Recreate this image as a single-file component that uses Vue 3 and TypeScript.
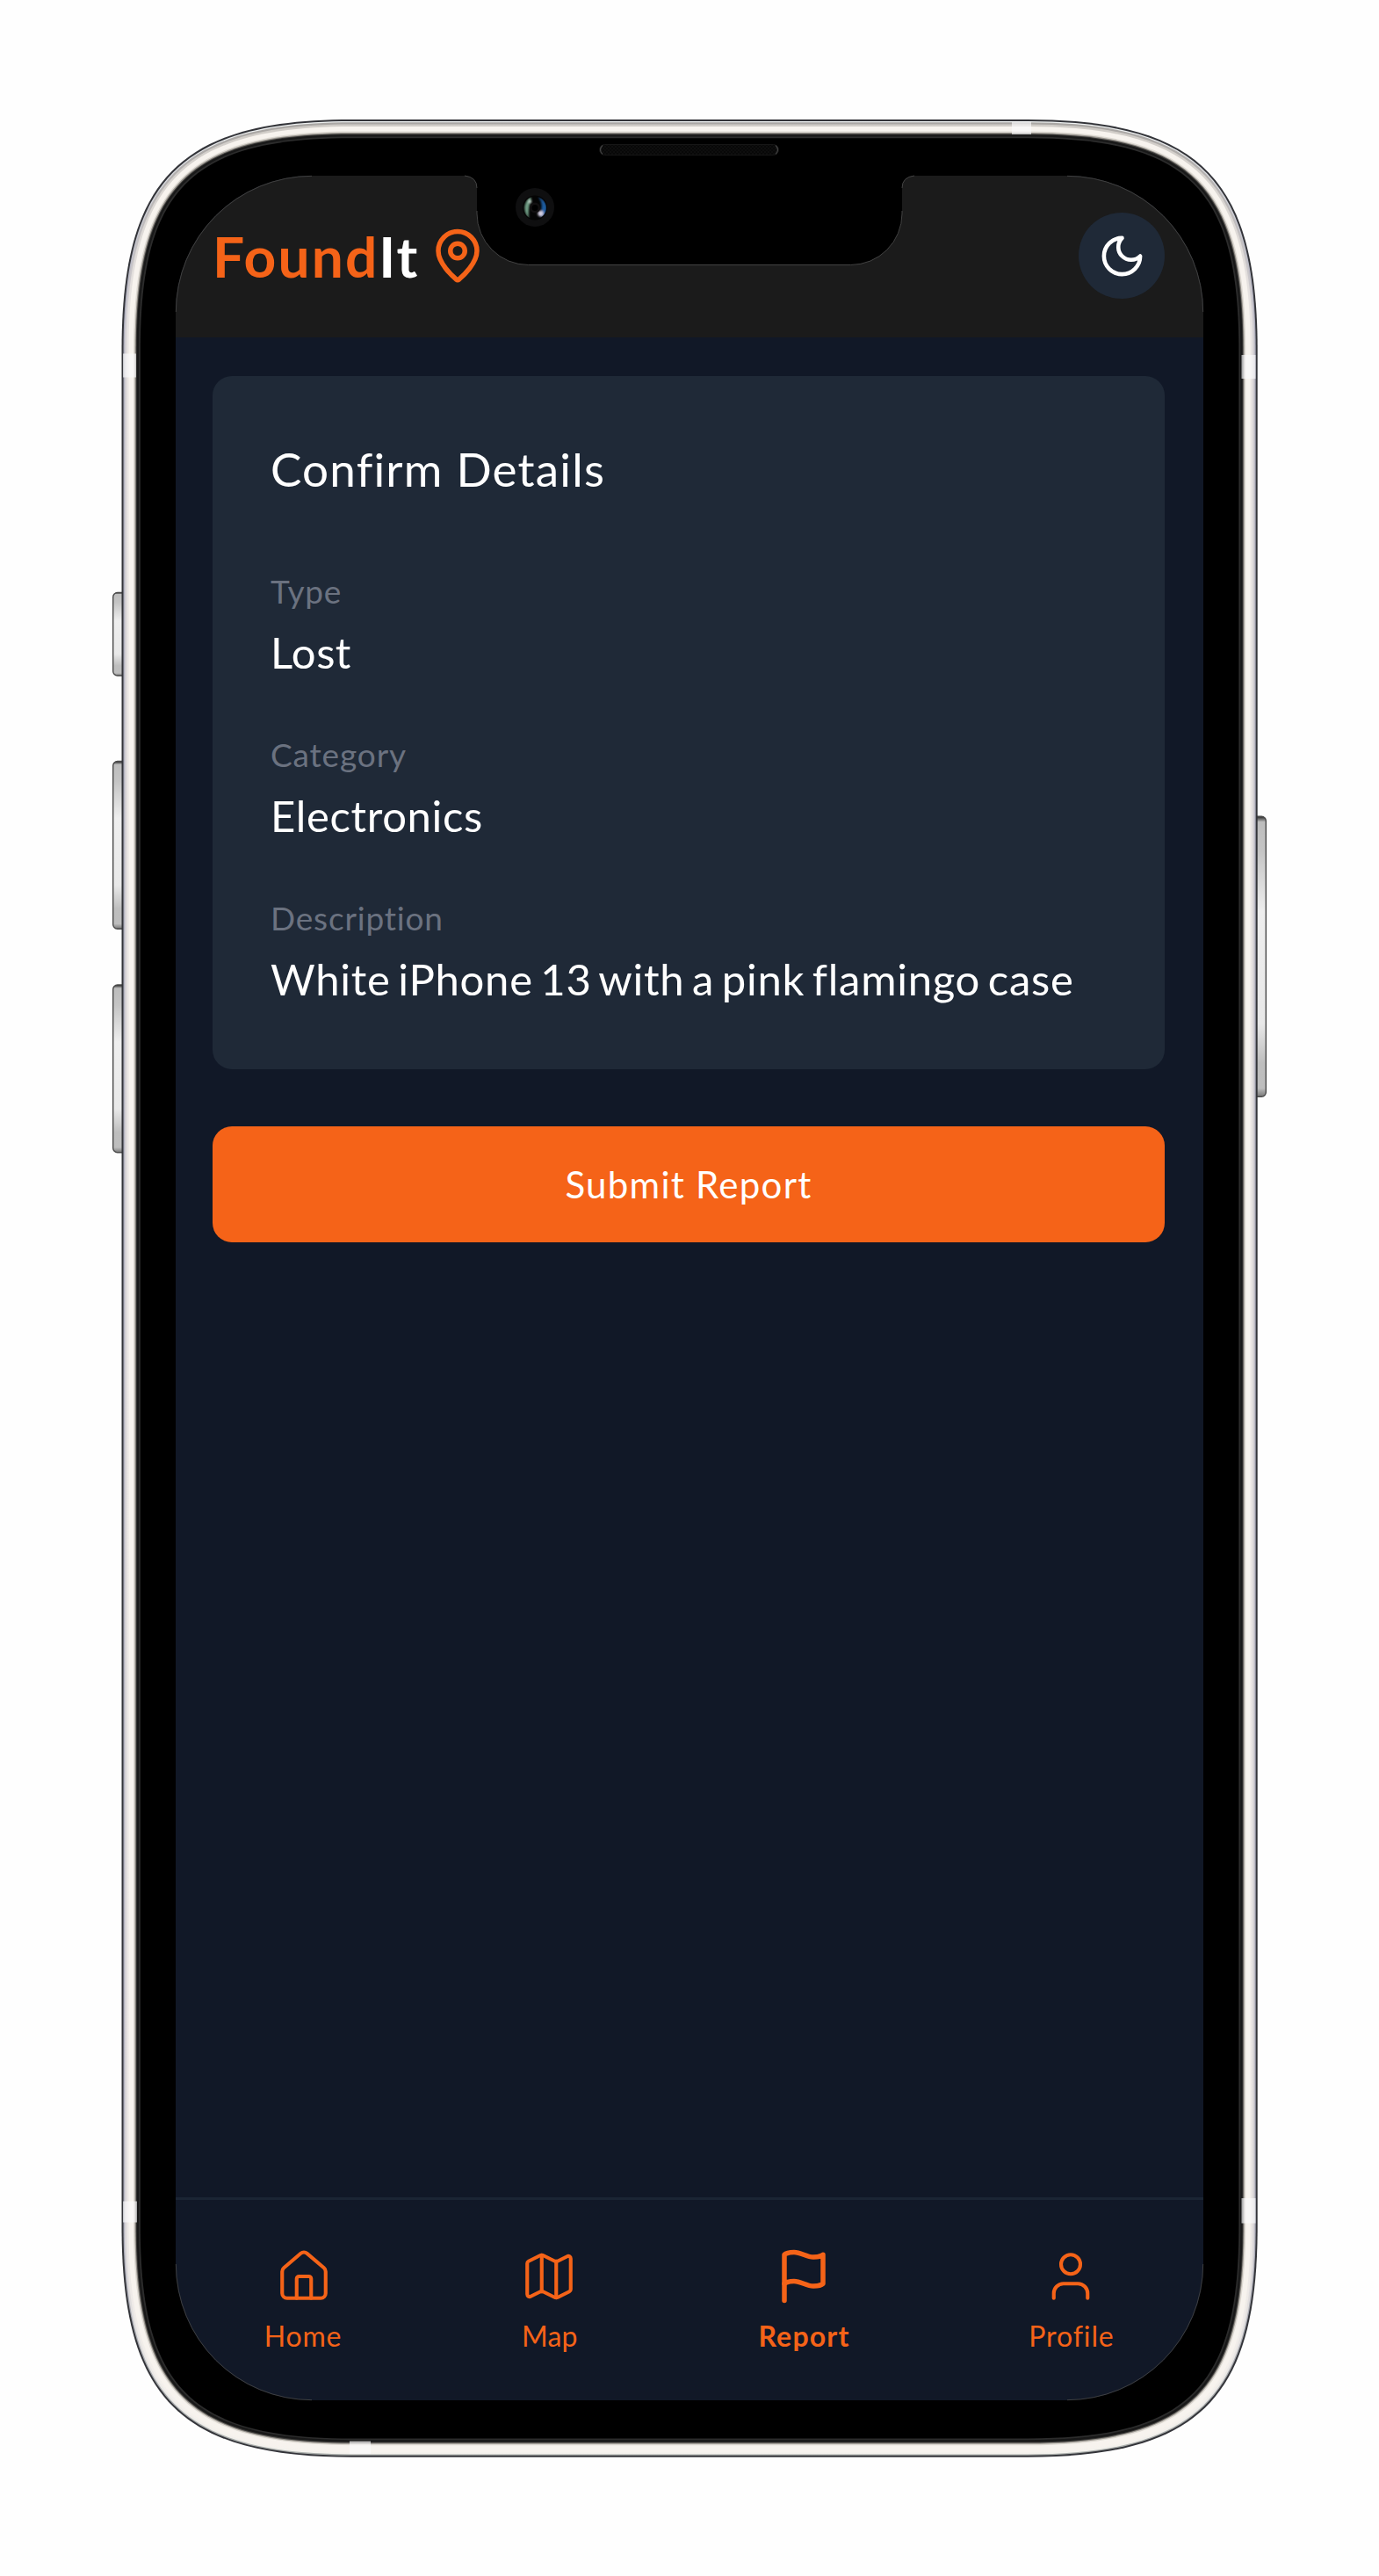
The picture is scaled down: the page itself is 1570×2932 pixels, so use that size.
<script setup lang="ts">
interface Detail {
  label: string
  value: string
  labelSpacing: string
  valueSpacing: string
  wordSpacing?: string
}

interface Tab {
  name: string
  spacing: string
  nudge: string
  active?: boolean
  stroke: number
  paths: string[]
}

interface Ring {
  inset: number
  fill: string
}

const details: Detail[] = [
  { label: 'Type', value: 'Lost', labelSpacing: '0.8px', valueSpacing: '0.5px' },
  { label: 'Category', value: 'Electronics', labelSpacing: '0.86px', valueSpacing: '0.64px' },
  {
    label: 'Description',
    value: 'White iPhone 13 with a pink flamingo case',
    labelSpacing: '0.83px',
    valueSpacing: '0.75px',
    wordSpacing: '-4.700px',
  },
]

const tabs: Tab[] = [
  {
    name: 'Home',
    spacing: '0.77px',
    nudge: '-2px',
    stroke: 1.5,
    paths: [
      'M15 21v-8a1 1 0 0 0-1-1h-4a1 1 0 0 0-1 1v8',
      'M3 10a2 2 0 0 1 .709-1.528l7-5.999a2 2 0 0 1 2.582 0l7 5.999A2 2 0 0 1 21 10v9a2 2 0 0 1-2 2H5a2 2 0 0 1-2-2z',
    ],
  },
  {
    name: 'Map',
    spacing: '0.1px',
    nudge: '1px',
    stroke: 1.5,
    paths: [
      'M14.106 5.553a2 2 0 0 0 1.788 0l3.659-1.83A1 1 0 0 1 21 4.619v12.764a1 1 0 0 1-.553.894l-4.553 2.277a2 2 0 0 1-1.788 0l-4.212-2.106a2 2 0 0 0-1.788 0l-3.659 1.83A1 1 0 0 1 3 19.381V6.618a1 1 0 0 1 .553-.894l4.553-2.277a2 2 0 0 1 1.788 0z',
      'M15 5.764v15',
      'M9 3.236v15',
    ],
  },
  {
    name: 'Report',
    spacing: '1.2px',
    nudge: '0px',
    active: true,
    stroke: 2,
    paths: ['M4 15s1-1 4-1 5 2 8 2 4-1 4-1V3s-1 1-4 1-5-2-8-2-4 1-4 1z', 'M4 22v-7'],
  },
  {
    name: 'Profile',
    spacing: '0.9px',
    nudge: '1px',
    stroke: 1.5,
    paths: ['M19 21v-2a4 4 0 0 0-4-4H9a4 4 0 0 0-4 4v2', 'M16 7a4 4 0 1 1-8 0a4 4 0 0 1 8 0z'],
  },
]

// Body outline with continuous-curvature corners, inset evenly by d.
function body(d: number): string {
  const l = 138.5 + d
  const t = 136 + d
  const r = 1431.7 - d
  const b = 2796.7 - d
  const L = 262 - d
  const k = (8 * (58 - 0.293 * d) - L) / 3
  return (
    `M${l} ${t + L}C${l} ${t + k} ${l + k} ${t} ${l + L} ${t}H${r - L}` +
    `C${r - k} ${t} ${r} ${t + k} ${r} ${t + L}V${b - L}` +
    `C${r} ${b - k} ${r - k} ${b} ${r - L} ${b}H${l + L}` +
    `C${l + k} ${b} ${l} ${b - k} ${l} ${b - L}Z`
  )
}

const rings: Ring[] = [
  { inset: 0, fill: '#333439' },
  { inset: 2, fill: 'url(#edge1)' },
  { inset: 3.3, fill: 'url(#edge2)' },
  { inset: 5.5, fill: 'url(#edge3)' },
  { inset: 8, fill: '#f7f3ee' },
  { inset: 13.5, fill: '#dedad3' },
  { inset: 15, fill: '#98948e' },
  { inset: 16.2, fill: '#3c3b39' },
  { inset: 17.2, fill: '#181818' },
  { inset: 19.5, fill: '#2c2c2c' },
  { inset: 21.3, fill: '#000' },
]
</script>

<template>
  <main class="stage">
    <svg class="frame" viewBox="0 0 1570 2932" width="1570" height="2932" aria-hidden="true">
      <defs>
        <linearGradient id="edge1" x1="0" y1="0" x2="0" y2="1">
          <stop offset="0" stop-color="#f0f3f3" /><stop offset="0.08" stop-color="#a9a9b8" /><stop offset="0.9" stop-color="#a9a9b8" /><stop offset="1" stop-color="#a9adaa" />
        </linearGradient>
        <linearGradient id="edge2" x1="0" y1="0" x2="0" y2="1">
          <stop offset="0" stop-color="#a9a6a3" /><stop offset="0.08" stop-color="#d2cfd3" /><stop offset="0.9" stop-color="#d6d3d6" /><stop offset="1" stop-color="#f4f2ed" />
        </linearGradient>
        <linearGradient id="edge3" x1="0" y1="0" x2="0" y2="1">
          <stop offset="0" stop-color="#d0ccc7" /><stop offset="0.08" stop-color="#e8e4e2" /><stop offset="0.9" stop-color="#eae6e4" /><stop offset="1" stop-color="#f7f3ee" />
        </linearGradient>
        <linearGradient id="key" x1="0" y1="0" x2="0" y2="1">
          <stop offset="0" stop-color="#222" /><stop offset="0.02" stop-color="#bdbdbd" /><stop offset="0.12" stop-color="#c4c4c4" /><stop offset="0.34" stop-color="#eeeeee" /><stop offset="0.74" stop-color="#e8e8e8" /><stop offset="0.88" stop-color="#bebebe" /><stop offset="0.97" stop-color="#bdbdbd" /><stop offset="1" stop-color="#777" />
        </linearGradient>
      </defs>
      <g fill="url(#key)" stroke="#4a4a4a" stroke-width="1.4">
        <rect x="128.7" y="674.5" width="20" height="94.500" rx="5" />
        <rect x="128.7" y="866.5" width="20" height="190.700" rx="5" />
        <rect x="128.7" y="1121" width="20" height="190.700" rx="5" />
        <rect x="1421" y="929.2" width="20.300" height="319" rx="5" />
      </g>
      <path v-for="ring in rings" :key="ring.inset" :d="body(ring.inset)" :fill="ring.fill" />
      <g fill="#fafafc" fill-opacity="0.65">
        <rect x="1152" y="138.500" width="22" height="14.500" />
        <rect x="398" y="2778.500" width="24" height="14.500" />
        <rect x="140" y="402.500" width="15" height="27" />
        <rect x="140" y="2505.500" width="16" height="24" />
        <rect x="1413.500" y="404" width="16" height="27" />
        <rect x="1413.500" y="2502" width="16" height="28.500" />
      </g>
    </svg>

    <section class="screen">
      <header class="topbar">
        <div class="brand">
          <span class="wordmark"><span class="accent">Found</span>It</span>
          <svg class="pin" viewBox="0 0 24 24" aria-hidden="true">
            <path d="M20 10c0 4.993-5.539 10.193-7.399 11.799a1 1 0 0 1-1.202 0C9.539 20.193 4 14.993 4 10a8 8 0 0 1 16 0" />
            <circle cx="12" cy="10" r="3" />
          </svg>
        </div>
        <button class="theme" type="button" aria-label="Toggle theme">
          <svg viewBox="0 0 24 24" aria-hidden="true"><path d="M12 3a6 6 0 0 0 9 9 9 9 0 1 1-9-9Z" /></svg>
        </button>
      </header>

      <div class="content">
        <article class="card">
          <h1>Confirm Details</h1>
          <dl>
            <div v-for="d in details" :key="d.label" class="row">
              <dt :style="{ letterSpacing: d.labelSpacing }">{{ d.label }}</dt>
              <dd :style="{ letterSpacing: d.valueSpacing, wordSpacing: d.wordSpacing }">{{ d.value }}</dd>
            </div>
          </dl>
        </article>
        <button class="submit" type="button">Submit Report</button>
      </div>

      <nav class="tabs">
        <a v-for="tab in tabs" :key="tab.name" class="tab" :class="{ active: tab.active }">
          <svg viewBox="0 0 24 24" :stroke-width="tab.stroke" aria-hidden="true">
            <path v-for="p in tab.paths" :key="p" :d="p" />
          </svg>
          <span :style="{ letterSpacing: tab.spacing, marginLeft: tab.nudge }">{{ tab.name }}</span>
        </a>
      </nav>
    </section>

    <svg class="frame" viewBox="0 0 1570 2932" width="1570" height="2932" aria-hidden="true">
      <defs>
        <clipPath id="lens"><circle cx="609" cy="236.500" r="13" /></clipPath>
        <filter id="soft" x="-50%" y="-50%" width="200%" height="200%"><feGaussianBlur stdDeviation="0.9" /></filter>
        <pattern id="mesh" width="4" height="4" patternUnits="userSpaceOnUse"><rect width="4" height="4" fill="#0e0e0e" /><rect width="2" height="2" fill="#080808" /><rect x="2" y="2" width="2" height="2" fill="#080808" /></pattern>
      </defs>
      <path fill="none" stroke="#4a4a4a" stroke-width="0.8" d="M200.300 355A155 155 0 0 1 355 200.300M1215 200.300A155 155 0 0 1 1369.700 355M1369.700 2577A155 155 0 0 1 1215 2731.700M355 2731.700A155 155 0 0 1 200.300 2577" />
      <path d="M529 199V200Q543 201.500 543 214V243A58.500 58.500 0 0 0 601.500 301.500H968.500A58.500 58.500 0 0 0 1027 243V214Q1027 201.500 1041 200V199Z" fill="#000" />
      <path d="M529 200Q543 201.500 543 214M543 240V243A58.500 58.500 0 0 0 601.500 301.500H968.500A58.500 58.500 0 0 0 1027 243V240M1027 214Q1027 201.500 1041 200" fill="none" stroke="#4a4a4a" stroke-width="0.9" />
      <rect x="682.500" y="164.500" width="204" height="12" rx="6" fill="url(#mesh)" stroke="#161616" />
      <path d="M686 165.500Q681 170.500 686 175.500M883 165.500Q888 170.500 883 175.500" fill="none" stroke="#444" stroke-width="1.200" />
      <circle cx="609" cy="236" r="22" fill="#0f0f10" />
      <circle cx="609" cy="236.500" r="14" fill="#040404" />
      <g clip-path="url(#lens)">
        <g filter="url(#soft)">
          <path d="M603 224Q592 236 602 249Q601 236 605 226Z" fill="#6f9d85" />
          <path d="M613 224Q620 233 614 246Q619 249 622 242Q625 230 613 224Z" fill="#1f5b9f" />
          <circle cx="603.300" cy="229.500" r="2" fill="#bdd0c6" />
          <circle cx="615.500" cy="243" r="3.200" fill="#d3cfe2" />
        </g>
        <circle cx="609" cy="236.500" r="6" fill="#110f10" />
        <circle cx="609" cy="236.500" r="3.500" fill="#000" />
      </g>
    </svg>
  </main>
</template>

<style>
body {
  margin: 0;
  background: #fefefe;
}
</style>

<style scoped>
.stage {
  position: relative;
  box-sizing: border-box;
  width: 1570px;
  height: 2932px;
  padding: 200px;
  background: #fefefe;
  font-family: Lato, "Noto Sans", sans-serif;
  overflow: hidden;
}
.frame {
  position: absolute;
  inset: 0;
  pointer-events: none;
}
.screen {
  position: relative;
  display: flex;
  flex-direction: column;
  width: 1170px;
  height: 2532px;
  border-radius: 155px;
  overflow: hidden;
  background: #111827;
  color: #fff;
}
.topbar {
  display: flex;
  align-items: center;
  justify-content: space-between;
  box-sizing: border-box;
  height: 184px;
  padding: 0 44px 2px 42px;
  background: #1b1b1b;
}
.brand {
  display: flex;
  align-items: center;
}
.wordmark {
  width: 246px;
  padding-top: 2px;
  font-size: 64px;
  font-weight: 700;
  line-height: 80px;
  letter-spacing: 2.2px;
}
.accent {
  color: #f56318;
}
.pin,
.theme svg,
.tab svg {
  display: block;
  fill: none;
  stroke-linecap: round;
  stroke-linejoin: round;
}
.pin {
  width: 66px;
  height: 66px;
  stroke: #f56318;
  stroke-width: 2;
}
.theme {
  display: grid;
  place-items: center;
  width: 98px;
  height: 98px;
  padding: 0;
  border: 0;
  border-radius: 50%;
  background: #1f2937;
}
.theme svg {
  width: 55px;
  height: 55px;
  stroke: #fff;
  stroke-width: 2;
}
.content {
  flex: 1;
  display: flex;
  flex-direction: column;
  gap: 65.5px;
  padding: 44px 44px 0 42px;
}
.card {
  box-sizing: border-box;
  height: 788.7px;
  padding: 69.700px 66px 0;
  border-radius: 22px;
  background: #1f2937;
}
h1 {
  margin: 0 0 78px;
  font-size: 53px;
  font-weight: 400;
  line-height: 72px;
  letter-spacing: 1.2px;
}
dl {
  display: flex;
  flex-direction: column;
  gap: 57px;
  margin: 0;
}
.row {
  display: flex;
  flex-direction: column;
  gap: 9px;
}
dt {
  font-size: 37px;
  line-height: 50px;
  color: #6b7280;
}
dd {
  margin: 0;
  font-size: 49px;
  line-height: 70px;
  white-space: nowrap;
}
.submit {
  height: 131.700px;
  padding: 0;
  border: 0;
  border-radius: 22px;
  background: #f56318;
  color: #fff;
  font: 400 42px/56px Lato, "Noto Sans", sans-serif;
  letter-spacing: 1.27px;
}
.tabs {
  display: grid;
  grid-template-columns: 292px 266.6px 313.8px 294.2px;
  box-sizing: border-box;
  height: 231px;
  padding-top: 54px;
  border-top: 3px solid #1b2534;
}
.tab {
  display: flex;
  flex-direction: column;
  align-items: center;
  gap: 14.6px;
  color: #f56318;
  font-size: 32px;
  line-height: 40px;
}
.tab svg {
  width: 66px;
  height: 66px;
  stroke: currentColor;
}
.tab.active {
  font-weight: 700;
}
</style>
